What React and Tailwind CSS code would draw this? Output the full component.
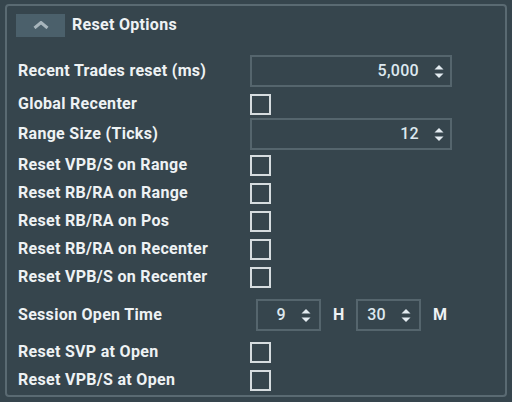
import React from 'react';

const font = { fontFamily: 'Roboto, "Liberation Sans", sans-serif' };

function Spin() {
  return (
    <svg width="10" height="15" viewBox="0 0 10 15" className="shrink-0">
      <path d="M0.5 5.5 L5 1 L9.5 5.5 Z" fill="#e4ecf1" />
      <path d="M0.5 9.5 L9.5 9.5 L5 14 Z" fill="#e4ecf1" />
    </svg>
  );
}

function NumberBox({ value, wide }) {
  return (
    <div
      className={`h-[32px] border-2 border-[#55656d] flex items-center justify-end ${
        wide ? 'w-[202px] pr-[6px] gap-[15px]' : 'w-[65px] pr-[8px] gap-[15px]'
      }`}
    >
      <span className="text-[16px] font-medium tracking-[0.3px] text-[#dde8ef]">{value}</span>
      <Spin />
    </div>
  );
}

function Check() {
  return <div className="w-[21px] h-[21px] border-2 border-[#d6dcdf]" />;
}

function Row({ label, h = 'h-[28px]', mt = '', children }) {
  return (
    <div className={`flex items-center ${h} ${mt}`}>
      <div className="w-[232px] text-[16px] font-bold tracking-[0.3px] text-[#eef2f4]">{label}</div>
      {children}
    </div>
  );
}

export default function App() {
  return (
    <div className="w-[512px] h-[402px] bg-[#36454d] pt-[4px] px-[5px] pb-[5px]" style={font}>
      <div className="h-full border-2 border-[#5a6a72] rounded-[4px] pl-[9px] pt-[7px]">
        {/* header */}
        <div className="flex items-center gap-[7px]">
          <div className="w-[49px] h-[23px] bg-[#4b606b] flex items-center justify-center">
            <svg width="16" height="8" viewBox="0 0 16 8">
              <path d="M1.5 7 L8 1.5 L14.5 7" fill="none" stroke="#a7b5bc" strokeWidth="3" />
            </svg>
          </div>
          <span className="text-[16px] font-bold tracking-[0.3px] text-[#eef2f4]">Reset Options</span>
        </div>

        <div className="pl-[2px] mt-[18px]">
          <Row label="Recent Trades reset (ms)" h="h-[32px]">
            <NumberBox value="5,000" wide />
          </Row>
          <Row label="Global Recenter" mt="mt-[3px]">
            <Check />
          </Row>
          <Row label="Range Size (Ticks)" h="h-[32px]">
            <NumberBox value="12" wide />
          </Row>
          <Row label="Reset VPB/S on Range" mt="mt-[1px]">
            <Check />
          </Row>
          <Row label="Reset RB/RA on Range">
            <Check />
          </Row>
          <Row label="Reset RB/RA on Pos">
            <Check />
          </Row>
          <Row label="Reset RB/RA on Recenter">
            <Check />
          </Row>
          <Row label="Reset VPB/S on Recenter">
            <Check />
          </Row>
          <Row label="Session Open Time" h="h-[32px]" mt="mt-[8px]">
            <div className="flex items-center ml-[6px]">
              <NumberBox value="9" />
              <span className="ml-[12px] w-[23px] text-[16px] font-bold text-[#eef2f4]">H</span>
              <NumberBox value="30" />
              <span className="ml-[12px] text-[16px] font-bold text-[#eef2f4]">M</span>
            </div>
          </Row>
          <Row label="Reset SVP at Open" mt="mt-[7px]">
            <Check />
          </Row>
          <Row label="Reset VPB/S at Open">
            <Check />
          </Row>
        </div>
      </div>
    </div>
  );
}
